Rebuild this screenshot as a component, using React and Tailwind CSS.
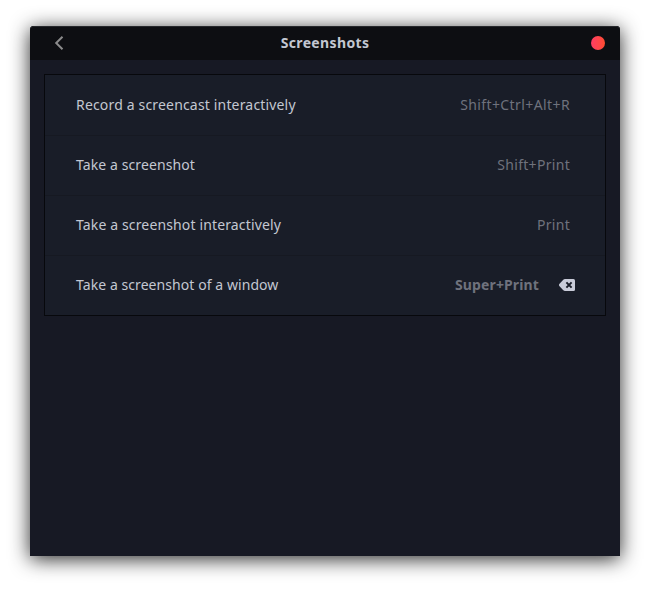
const shortcuts = [
  { label: 'Record a screencast interactively', keys: 'Shift+Ctrl+Alt+R', labelTracking: 'tracking-[0.17px]', keyTracking: 'tracking-[0.4px]' },
  { label: 'Take a screenshot', keys: 'Shift+Print', labelTracking: 'tracking-[0.1px]', keyTracking: 'tracking-[0.3px]' },
  { label: 'Take a screenshot interactively', keys: 'Print', labelTracking: 'tracking-[0.14px]', keyTracking: 'tracking-[0.3px]' },
  { label: 'Take a screenshot of a window', keys: 'Super+Print', labelTracking: 'tracking-[0.07px]', keyTracking: 'tracking-[0.13px]', custom: true },
];

function BackIcon() {
  return (
    <svg width="10" height="14" viewBox="0 0 10 14" fill="none" className="ml-[9px] block">
      <path d="M8.5 0.7 L2.2 7 L8.5 13.3" stroke="#8b8b8c" strokeWidth="2" />
    </svg>
  );
}

function ClearIcon() {
  return (
    <svg width="16" height="12" viewBox="0 0 16 12" className="block">
      <path d="M6 0H14.5Q16 0 16 1.5V10.5Q16 12 14.5 12H6Q5 12 4.3 11.3L0.3 7Q-0.3 6 0.3 5L4.3 0.7Q5 0 6 0Z" fill="#c9ccd9" />
      <path d="M7.4 3.4L12.6 8.6M12.6 3.4L7.4 8.6" stroke="#191d28" strokeWidth="2" />
    </svg>
  );
}

function ShortcutRow({ label, keys, labelTracking, keyTracking, custom }) {
  return (
    <div className={`flex h-[60px] items-center justify-between pl-[31px] ${custom ? 'pr-[30px]' : 'pr-[35px]'}`}>
      <span className={`text-[#c3c7d1] ${labelTracking}`}>{label}</span>
      <div className="flex items-center gap-5">
        <span className={`text-[#6f727d] ${custom ? 'font-bold' : ''} ${keyTracking}`}>{keys}</span>
        {custom && <ClearIcon />}
      </div>
    </div>
  );
}

export default function App() {
  return (
    <div className="h-[590px] w-[650px] overflow-hidden bg-white px-[30px] pt-[26px] font-['Noto_Sans',sans-serif] text-[14px] leading-5 whitespace-nowrap">
      <div className="h-[530px] rounded-t-[4px] bg-[#171924] shadow-[0_3px_20px_rgba(0,0,0,0.85)]">
        <header className="grid h-[34px] grid-cols-3 items-center rounded-t-[4px] bg-[#0d0e12] px-[15px] inset-shadow-[0_1px_0_#26282c]">
          <BackIcon />
          <h1 className="text-center font-bold tracking-[0.36px] text-[#c3c7d1]">Screenshots</h1>
          <div className="size-[14px] justify-self-end rounded-full bg-linear-to-r from-[#ff3d63] to-[#ff4c2e]" />
        </header>
        <main className="px-[14px] pt-[14px]">
          <section className="divide-y divide-[#161922] border border-[#07080c] bg-[#191d28] *:box-content">
            {shortcuts.map((s) => <div key={s.label} className="-mt-px h-[60px] first:mt-0"><ShortcutRow {...s} /></div>)}
          </section>
        </main>
      </div>
    </div>
  );
}
